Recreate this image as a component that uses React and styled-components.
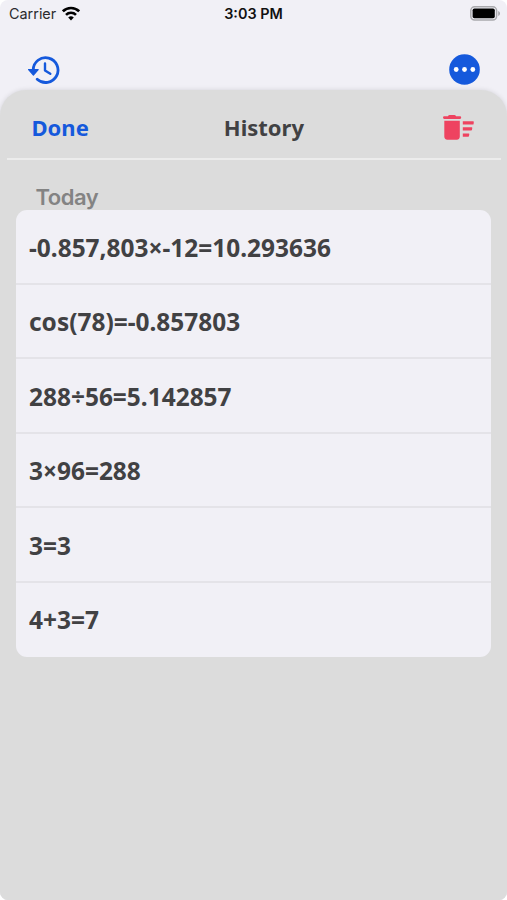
import React from 'react';
import styled, { createGlobalStyle } from 'styled-components';

const entries = [
    '-0.857,803×-12=10.293636',
    'cos(78)=-0.857803',
    '288÷56=5.142857',
    '3×96=288',
    '3=3',
    '4+3=7',
];

const WifiIcon = () => (
    <svg width="18" height="15" viewBox="0 0 18 15" fill="none" stroke="#000" strokeWidth="2.6">
        <path d="M.9 5.3a11.6 11.6 0 0 1 16.2 0" />
        <path d="M4 8.8a7.1 7.1 0 0 1 10 0" />
        <path d="M9 14.4 6.2 11.6a4 4 0 0 1 5.6 0z" fill="#000" stroke="none" />
    </svg>
);

const BatteryIcon = () => (
    <svg width="31" height="15" viewBox="0 0 31 15">
        <rect x=".8" y=".8" width="25.8" height="13.2" rx="3.8" fill="#f1f0f6" stroke="#a9a9ad" strokeWidth="1.5" />
        <rect x="2.6" y="2.5" width="22.2" height="9.8" rx="1.8" fill="#000" />
        <path d="M28.2 5c2.4.9 2.4 4 0 4.9z" fill="#a9a9ad" />
    </svg>
);

const HistoryIcon = () => (
    <svg width="32" height="28" viewBox="0 0 32 28" fill="none" stroke="#1559dc" strokeWidth="2.8">
        <path d="M5.2 15V14A12.4 12.4 0 1 1 9.2 23.2" strokeLinecap="round" />
        <path d="M.6 13.5h9.6l-4.8 5.6z" fill="#1559dc" strokeWidth="1.2" strokeLinejoin="round" />
        <path d="M17 7.5v7l5.3 3.3" strokeWidth="2.4" strokeLinecap="round" strokeLinejoin="round" />
    </svg>
);

const MoreIcon = () => (
    <svg width="31" height="31" viewBox="0 0 31 31">
        <circle cx="15.5" cy="15.5" r="15.3" fill="#1559dc" />
        <g fill="#fff">
            <circle cx="7.2" cy="15.5" r="2.4" />
            <circle cx="15.5" cy="15.5" r="2.4" />
            <circle cx="23.8" cy="15.5" r="2.4" />
        </g>
    </svg>
);

const ClearIcon = () => (
    <svg width="31" height="25" viewBox="0 0 31 25" fill="#ee4360">
        <path d="M5 1.2Q5.4 0 6.6 0h4.8q1.2 0 1.6 1.2h4q1.2 0 1.2 1.4T17 4H1.2Q0 4 0 2.6t1.2-1.4z" />
        <path d="M1.3 5.8h15.5v15.8q0 3.1-3.1 3.1H4.4q-3.1 0-3.1-3.1z" />
        <path d="M19.8 6.2h10.4q.7 0 .6.7l-.2 2q-.1.7-.8.7h-10z" />
        <path d="M19.8 12.3h8.9q.7 0 .6.7l-.3 1.7q-.1.7-.8.7h-8.4z" />
        <path d="M19.8 18.6h5.9q.7 0 .6.7l-.3 1.7q-.1.7-.8.7h-5.4z" />
    </svg>
);

const App = () => {
    return (
        <Screen>
            <GlobalStyle />
            <StatusBar>
                <Carrier>
                    Carrier
                    <WifiIcon />
                </Carrier>
                <Clock>3:03 PM</Clock>
                <Battery>
                    <BatteryIcon />
                </Battery>
            </StatusBar>
            <Toolbar>
                <IconButton aria-label="History">
                    <HistoryIcon />
                </IconButton>
                <IconButton aria-label="More">
                    <MoreIcon />
                </IconButton>
            </Toolbar>
            <Sheet>
                <SheetHeader>
                    <DoneButton>Done</DoneButton>
                    <Title>History</Title>
                    <IconButton aria-label="Clear history">
                        <ClearIcon />
                    </IconButton>
                </SheetHeader>
                <SectionTitle>Today</SectionTitle>
                <List>
                    {entries.map((entry) => (
                        <Row key={entry}>{entry}</Row>
                    ))}
                </List>
            </Sheet>
        </Screen>
    );
};

const GlobalStyle = createGlobalStyle`
    body {
        margin: 0;
        background: #fff;
    }

    * {
        box-sizing: border-box;
    }

    svg {
        display: block;
    }
`;

const Screen = styled.div`
    display: flex;
    flex-direction: column;
    width: 507px;
    height: 900px;
    overflow: hidden;
    border-radius: 8px;
    background: #f1f0f6;
    font-family: 'Noto Sans', sans-serif;
`;

const StatusBar = styled.div`
    display: grid;
    grid-template-columns: 1fr auto 1fr;
    align-items: center;
    height: 27px;
    padding: 0 6px 0 9px;
    color: #111;
    font-family: Inter, sans-serif;
    font-size: 14.4px;
`;

const Carrier = styled.div`
    display: flex;
    align-items: center;
    gap: 6px;
    color: #2b2b2e;
`;

const Clock = styled.div`
    margin-right: 3px;
    font-weight: 600;
`;

const Battery = styled.div`
    justify-self: end;
    margin-top: -1px;
`;

const Toolbar = styled.div`
    display: flex;
    align-items: center;
    justify-content: space-between;
    height: 63px;
    padding: 22px 27px 0 28px;
`;

const IconButton = styled.button`
    padding: 0;
    border: 0;
    background: none;
`;

const Sheet = styled.div`
    flex: 1;
    padding: 0 16px;
    border-radius: 26px 26px 0 0;
    background: #dcdcdc;
    box-shadow: 0 0 5px rgba(0, 0, 0, 0.12);
`;

const SheetHeader = styled.div`
    display: flex;
    align-items: center;
    justify-content: space-between;
    height: 70px;
    margin: 0 -10px 0 -9px;
    padding: 6px 27px 0 24.5px;
    border-bottom: 2px solid #ececec;
`;

const DoneButton = styled(IconButton)`
    color: #1559dc;
    font: 700 22px/30px 'Noto Sans', sans-serif;
`;

const Title = styled.div`
    margin-right: 4px;
    color: #414143;
    font-size: 22px;
    font-weight: 700;
    line-height: 30px;
`;

const SectionTitle = styled.div`
    height: 50px;
    padding: 24px 0 0 19.5px;
    color: #838383;
    font-family: Inter, sans-serif;
    font-size: 22px;
    font-weight: 600;
    letter-spacing: -0.5px;
    line-height: 26px;
`;

const List = styled.div`
    overflow: hidden;
    border-radius: 11px;
    background: #f1f0f6;
`;

const Row = styled.div`
    display: flex;
    align-items: center;
    height: 74.5px;
    padding: 2px 0 0 13px;
    border-bottom: 2px solid #e4e3e8;
    color: #414143;
    font-size: 24.45px;
    font-weight: 700;

    &:last-child {
        border-bottom-color: transparent;
    }
`;

export default App;
